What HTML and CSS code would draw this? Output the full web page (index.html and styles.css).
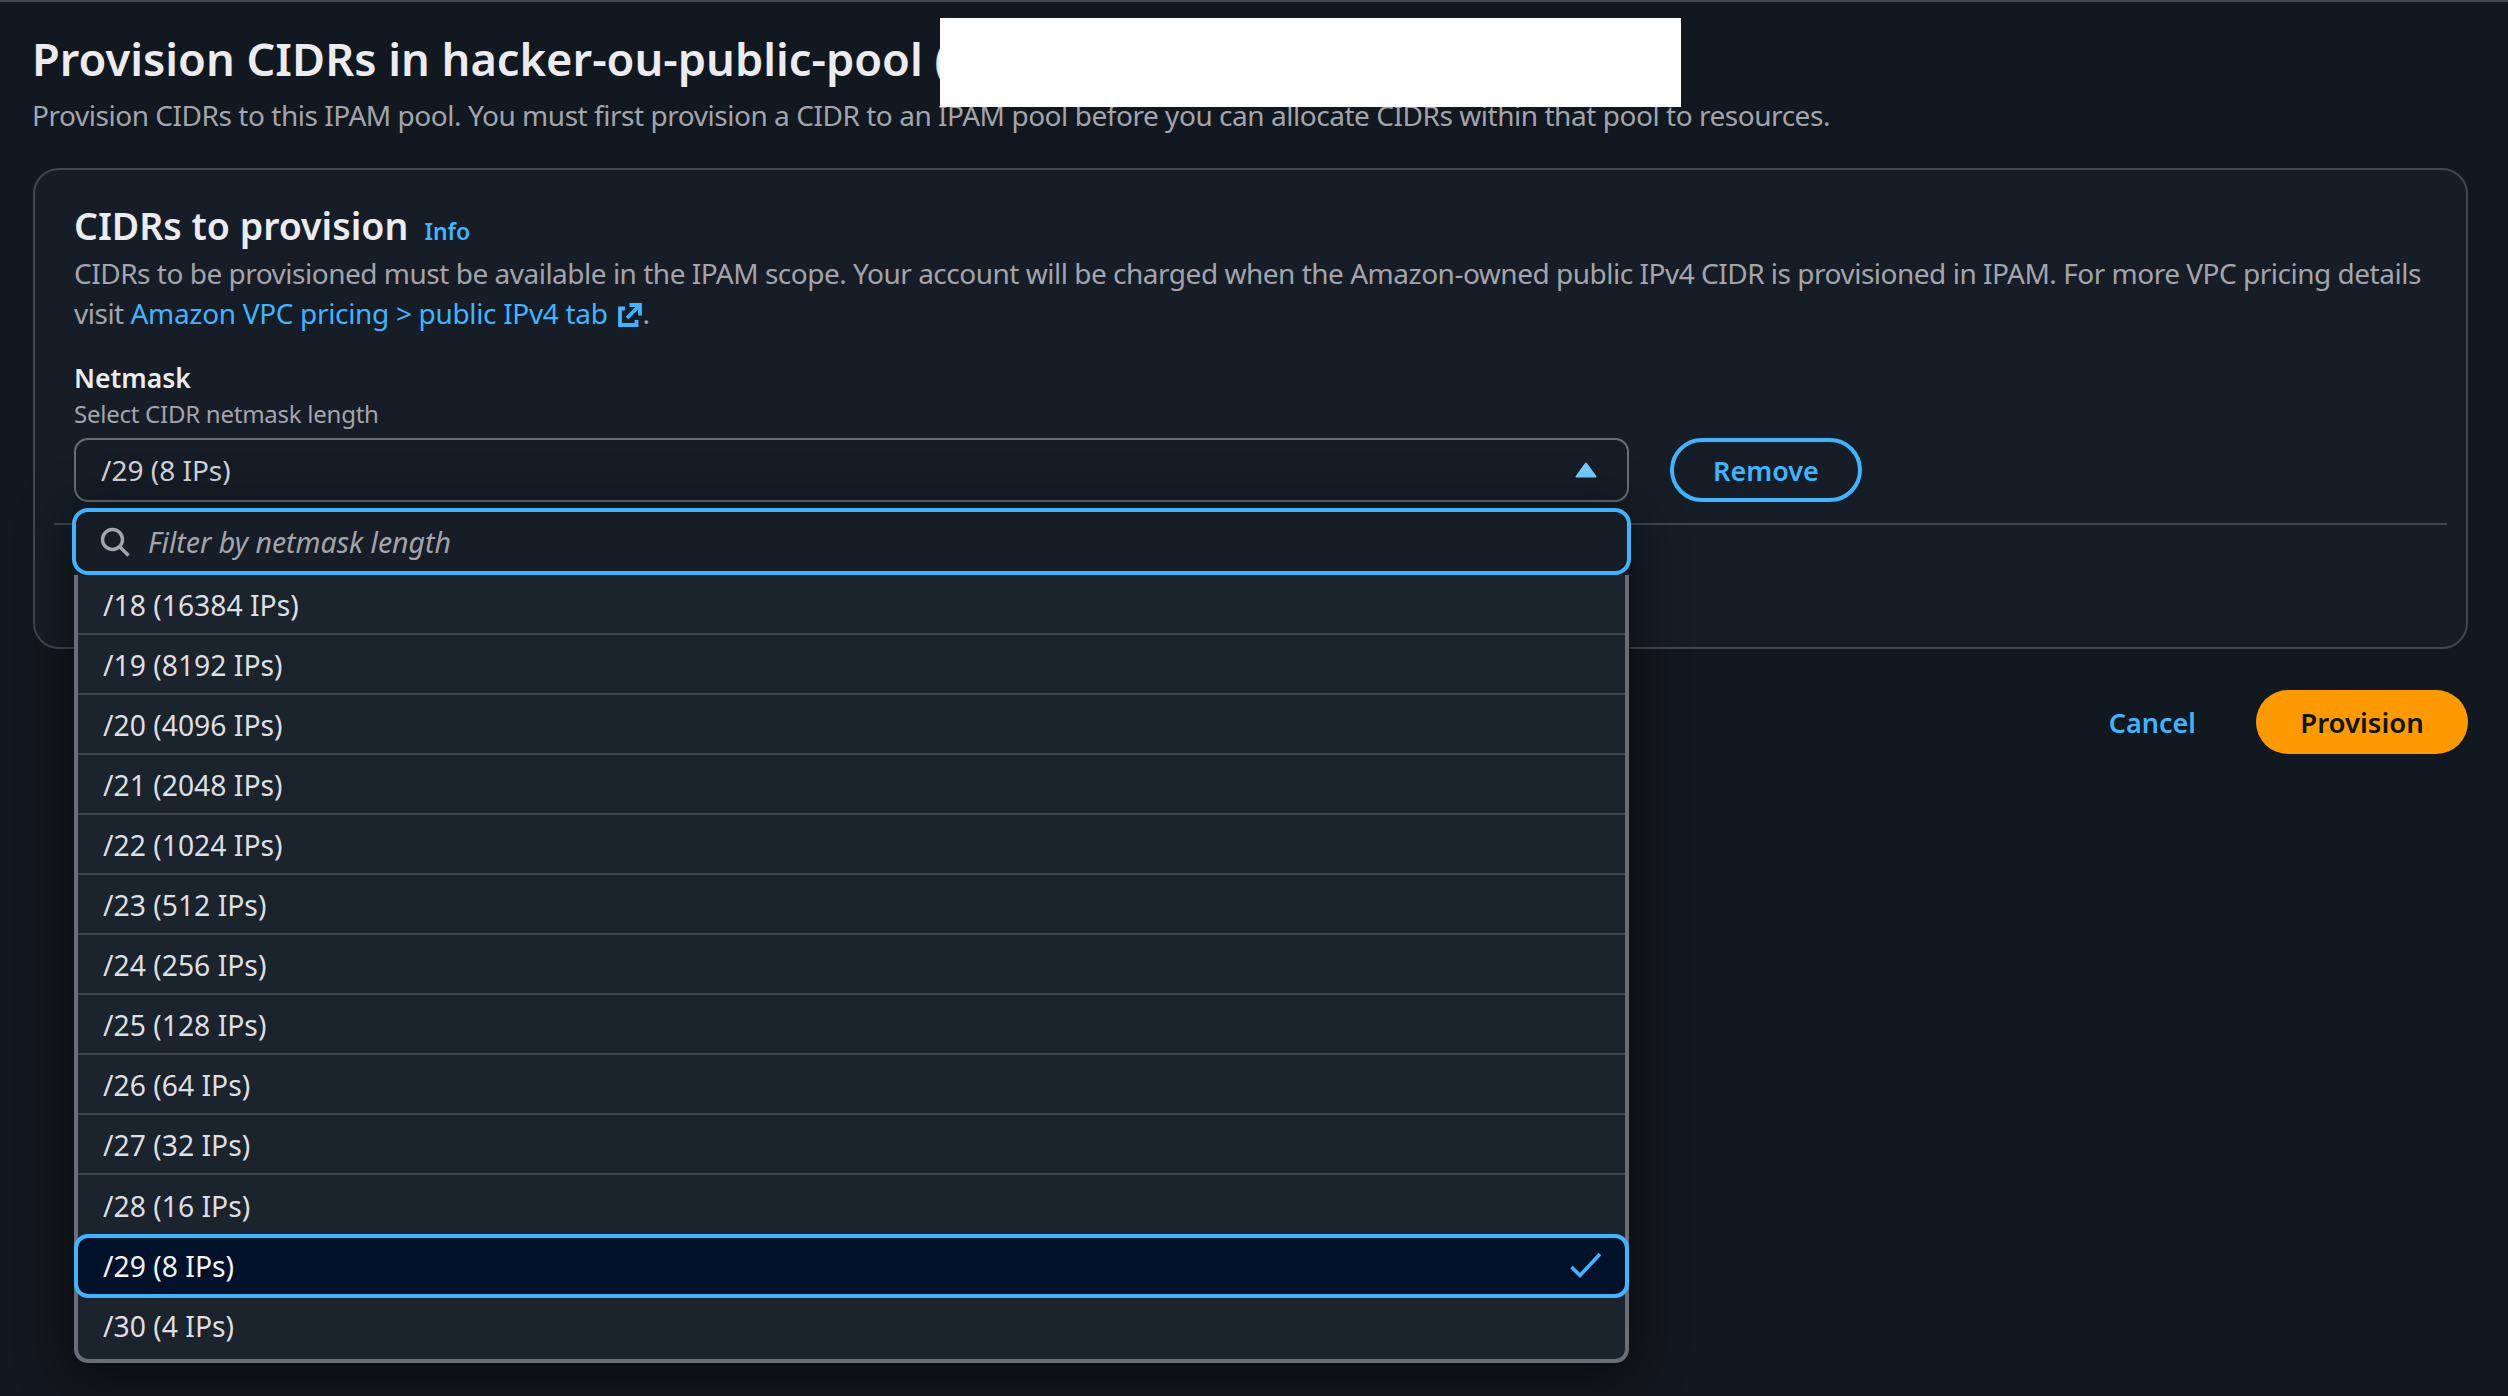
FILE: index.html
```html
<!DOCTYPE html>
<html lang="en">
<head>
<meta charset="utf-8">
<title>Provision CIDRs</title>
<link rel="stylesheet" href="styles.css">
</head>
<body>
<div class="topline"></div>
<main class="page">
  <header class="head">
    <h1 class="title">Provision CIDRs in hacker-ou-public-pool (</h1>
    <p class="desc">Provision CIDRs to this IPAM pool. You must first provision a CIDR to an IPAM pool before you can allocate CIDRs within that pool to resources.</p>
    <div class="redact"></div>
  </header>
  <section class="card">
    <div class="card-head">
      <h2 class="card-title">CIDRs to provision</h2>
      <a class="info">Info</a>
    </div>
    <p class="para">CIDRs to be provisioned must be available in the IPAM scope. Your account will be charged when the Amazon-owned public IPv4 CIDR is provisioned in IPAM. For more VPC pricing details visit <a class="link">Amazon VPC pricing &gt; public IPv4 tab <svg class="ext" viewBox="0 0 24 24" width="24" height="24"><path d="M7 5.500H2V22H18.500V17" fill="none" stroke="#42b4ff" stroke-width="3.800"/><path d="M9 15L22 2M11.500 2H22V12.500" fill="none" stroke="#42b4ff" stroke-width="3.800"/></svg></a>.</p>
    <div class="label">Netmask</div>
    <div class="hint">Select CIDR netmask length</div>
    <div class="field-row">
      <div class="select-wrap">
        <div class="select">
          <span>/29 (8 IPs)</span>
          <svg class="caret" viewBox="0 0 22 16" width="22" height="16"><path d="M11 1.500L20.500 14.500H1.500Z" fill="#75cfff" stroke="#75cfff" stroke-width="2" stroke-linejoin="round"/></svg>
        </div>
        <div class="dropdown">
          <div class="filter">
            <svg class="search" viewBox="0 0 30 30" width="30" height="30"><circle cx="12.500" cy="12.500" r="10" fill="none" stroke="#a4a4ad" stroke-width="3.400"/><path d="M20 20L28.500 28.500" stroke="#a4a4ad" stroke-width="3.400"/></svg>
            <span class="placeholder">Filter by netmask length</span>
          </div>
          <ul class="list">
            <li class="item">/18 (16384 IPs)</li>
            <li class="item">/19 (8192 IPs)</li>
            <li class="item">/20 (4096 IPs)</li>
            <li class="item">/21 (2048 IPs)</li>
            <li class="item">/22 (1024 IPs)</li>
            <li class="item">/23 (512 IPs)</li>
            <li class="item">/24 (256 IPs)</li>
            <li class="item">/25 (128 IPs)</li>
            <li class="item">/26 (64 IPs)</li>
            <li class="item">/27 (32 IPs)</li>
            <li class="item before-selected">/28 (16 IPs)</li>
            <li class="item selected">/29 (8 IPs)<svg class="check" viewBox="0 0 34 28" width="34" height="28"><path d="M2.500 15L11 23.500L31 2" fill="none" stroke="#42b4ff" stroke-width="3.600"/></svg></li>
            <li class="item last">/30 (4 IPs)</li>
          </ul>
        </div>
      </div>
      <button class="btn-outline">Remove</button>
    </div>
    <div class="divider"></div>
  </section>
  <footer class="actions">
    <a class="cancel">Cancel</a>
    <button class="btn-primary">Provision</button>
  </footer>
</main>
</body>
</html>
```
FILE: styles.css
```css
* { box-sizing: border-box; }
html, body { margin: 0; height: 100%; }
body {
  background: #12181f;
  color: #ebebf0;
  font-family: "Noto Sans", "Open Sans", sans-serif;
  overflow: hidden;
}
.topline { height: 2px; background: #434751; }
.page { padding: 0 40px 0 33px; display: flex; flex-direction: column; }
.head { position: relative; padding-top: 29px; height: 166px; }
.title { margin: 0 0 0 -1px; font-size: 45.200px; line-height: 56px; font-weight: 600; color: #ebebf0; white-space: nowrap; }
.desc { margin: 8px 0 0 -1px; font-size: 28px; line-height: 40px; letter-spacing: -0.460px; color: #a4a4ad; white-space: nowrap; }
.redact { position: absolute; left: 907px; top: 16px; width: 741px; height: 89px; background: #fff; }
.card {
  height: 481px;
  background: #161d26;
  border: 2px solid #424650;
  border-radius: 26px;
  padding: 35px 25px 0 39px;
  display: flex;
  flex-direction: column;
  position: relative;
}
.card-head { display: flex; align-items: baseline; gap: 16px; height: 42px; }
.card-title { margin: 0; font-size: 37.500px; line-height: 42px; font-weight: 600; color: #ebebf0; }
.info { color: #42b4ff; font-size: 23px; font-weight: 600; }
.para { margin: 6px 0 0; font-size: 28px; line-height: 40px; letter-spacing: -0.490px; color: #a4a4ad; }
.link { color: #42b4ff; letter-spacing: -0.330px; }
.ext { vertical-align: -3px; margin-left: 4px; }
.label { margin-top: 25px; font-size: 26.500px; line-height: 40px; font-weight: 600; color: #ebebf0; }
.hint { margin-top: -2px; font-size: 24px; line-height: 36px; letter-spacing: -0.250px; color: #a4a4ad; }
.field-row { display: flex; gap: 41px; margin-top: 6px; align-items: flex-start; }
.select-wrap { position: relative; width: 1555px; }
.select {
  height: 64px;
  border: 2px solid #6a6c76;
  border-radius: 14px;
  background: #161d26;
  display: flex;
  align-items: center;
  justify-content: space-between;
  padding: 0 30px 0 25px;
  font-size: 28px;
  color: #d5d5dc;
}
.dropdown {
  position: absolute;
  left: 0;
  right: 0;
  top: 70px;
  z-index: 2;
  border-radius: 14px;
  box-shadow: 0 8px 50px 8px rgba(0,0,0,.45);
}
.filter {
  position: relative;
  z-index: 2;
  height: 67px;
  margin: 0 -2px;
  background: #161d26;
  border: 4px solid #42b4ff;
  border-radius: 16px;
  display: flex;
  align-items: center;
  gap: 18px;
  padding-left: 24px;
}
.search { flex: none; }
.placeholder { font-style: italic; font-size: 28.500px; color: #a4a4ad; }
.list {
  list-style: none;
  margin: 0;
  padding: 0;
  background: #1b232d;
  border: solid #6a6c76;
  border-width: 0 4px 4px;
  border-radius: 0 0 14px 14px;
}
.item {
  position: relative;
  height: 60px;
  display: flex;
  align-items: center;
  justify-content: space-between;
  padding: 2px 38px 0 25px;
  font-size: 28.300px;
  color: #dedee3;
  border-bottom: 2px solid #424650;
}
.item.before-selected, .item.last { border-bottom: 0; }
.item.last { height: 61px; padding-top: 0; padding-bottom: 6px; }
.item.selected {
  height: 64px;
  margin: -1px -4px 0;
  padding: 0 22px 0 25px;
  background: #001129;
  border: 4px solid #42b4ff;
  border-radius: 14px;
  color: #f3f3f7;
}
.check { flex: none; }
.btn-outline {
  width: 192px;
  height: 64px;
  border: 4px solid #42b4ff;
  border-radius: 32px;
  background: transparent;
  color: #42b4ff;
  font: 600 27px "Noto Sans", sans-serif;
}
.divider { position: absolute; left: 19px; right: 19px; top: 353px; height: 2px; background: #424650; }
.actions { display: flex; justify-content: flex-end; align-items: center; gap: 60px; margin-top: 41px; }
.cancel { color: #42b4ff; font-size: 27px; font-weight: 600; }
.btn-primary {
  width: 212px;
  height: 64px;
  border: 0;
  border-radius: 32px;
  background: #ff9900;
  color: #0f141a;
  font: 600 27.500px "Noto Sans", sans-serif;
}
```
